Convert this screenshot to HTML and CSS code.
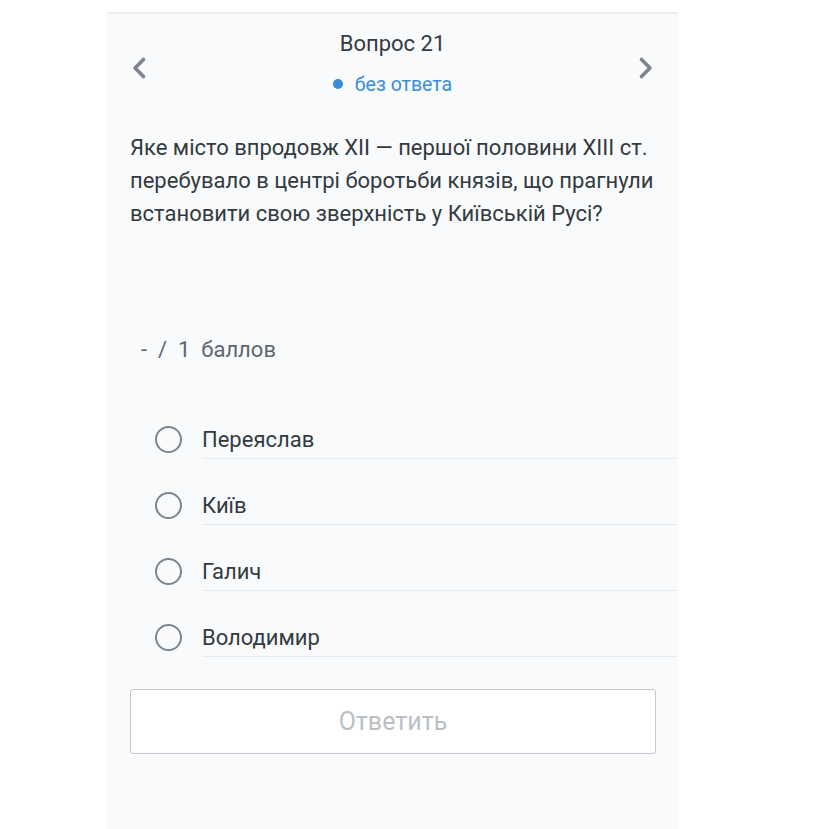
FILE: index.html
```html
<!DOCTYPE html>
<html>
	<head>
		<meta charset="UTF-8">
		<title>Вопрос 21</title>
		<link rel="stylesheet" href="styles.css">
	</head>
	<body>
		<div class="panel">
			<div class="head">
				<a class="nav prev" href="#">
					<svg width="16" height="24" viewBox="0 0 16 24"><path d="M12.5 3.5 L4 12 L12.5 20.5" fill="none" stroke="#7b858f" stroke-width="3.6" stroke-linecap="round" stroke-linejoin="round"/></svg>
				</a>
				<div class="head-title">
					<div class="num">Вопрос 21</div>
					<div class="status"><span class="dot"></span>без ответа</div>
				</div>
				<a class="nav next" href="#">
					<svg width="16" height="24" viewBox="0 0 16 24"><path d="M3.5 3.5 L12 12 L3.5 20.5" fill="none" stroke="#7b858f" stroke-width="3.6" stroke-linecap="round" stroke-linejoin="round"/></svg>
				</a>
			</div>
			<div class="question">
				Яке місто впродовж XII — першої половини XIII ст. перебувало в центрі боротьби князів, що прагнули встановити свою зверхність у Київській Русі?
			</div>
			<div class="score">-&nbsp; /&nbsp; 1&nbsp; баллов</div>
			<ul class="options">
				<li class="option"><span class="radio"></span><span class="label">Переяслав</span></li>
				<li class="option"><span class="radio"></span><span class="label">Київ</span></li>
				<li class="option"><span class="radio"></span><span class="label">Галич</span></li>
				<li class="option"><span class="radio"></span><span class="label">Володимир</span></li>
			</ul>
			<button class="answer" disabled>Ответить</button>
		</div>
	</body>
</html>
```

FILE: styles.css
```css
* {
	margin: 0;
	padding: 0;
	box-sizing: border-box;
}
body {
	background-color: #fff;
	font-family: Roboto, "Noto Sans", sans-serif;
	color: #333a40;
}
.panel {
	margin: 12px 0 0 107px;
	width: 571px;
	min-height: 817px;
	background-color: #f8fafc;
	border-top: 2px solid #eceef1;
	padding: 16px 0 0 23px;
}

/* шапка с навигацией */
.head {
	display: flex;
	align-items: center;
	margin-right: 23px;
}
.nav {
	display: flex;
	width: 16px;
	margin-top: 8px;
}
.prev {
	margin-left: 1px;
}
.next {
	margin-right: 1px;
}
.head-title {
	flex: 1;
	text-align: center;
}
.num {
	font-size: 22px;
	line-height: 28px;
	color: #333a40;
}
.status {
	margin-top: 14px;
	font-size: 19.5px;
	line-height: 26px;
	color: #3a8ddb;
}
.dot {
	display: inline-block;
	width: 10px;
	height: 10px;
	border-radius: 50%;
	background-color: #3a8ddb;
	margin-right: 12px;
	vertical-align: 2px;
}

/* вопрос */
.question {
	margin-top: 33px;
	margin-right: 14px;
	font-size: 22px;
	line-height: 33px;
	color: #333a40;
}
.score {
	margin: 106px 0 0 11px;
	font-size: 22px;
	line-height: 28px;
	color: #5d6770;
}

/* варианты ответа */
.options {
	list-style: none;
	margin-top: 54px;
}
.option {
	display: flex;
	align-items: center;
	padding-left: 25px;
	margin-bottom: 25px;
}
.option:last-child {
	margin-bottom: 0;
}
.radio {
	width: 27px;
	height: 27px;
	border: 2.7px solid #7b858f;
	border-radius: 50%;
	margin-right: 20px;
	margin-top: 1px;
	flex-shrink: 0;
}
.label {
	flex: 1;
	font-size: 22px;
	line-height: 28px;
	padding: 8px 0 4px;
	border-bottom: 1px solid #e7eaed;
	color: #333a40;
}

.answer {
	display: block;
	margin-top: 32px;
	width: 526px;
	height: 65px;
	background-color: #fff;
	border: 1.5px solid #c3c7cb;
	border-radius: 3px;
	font-family: Roboto, "Noto Sans", sans-serif;
	font-size: 25px;
	color: #b9bfc5;
}
```
